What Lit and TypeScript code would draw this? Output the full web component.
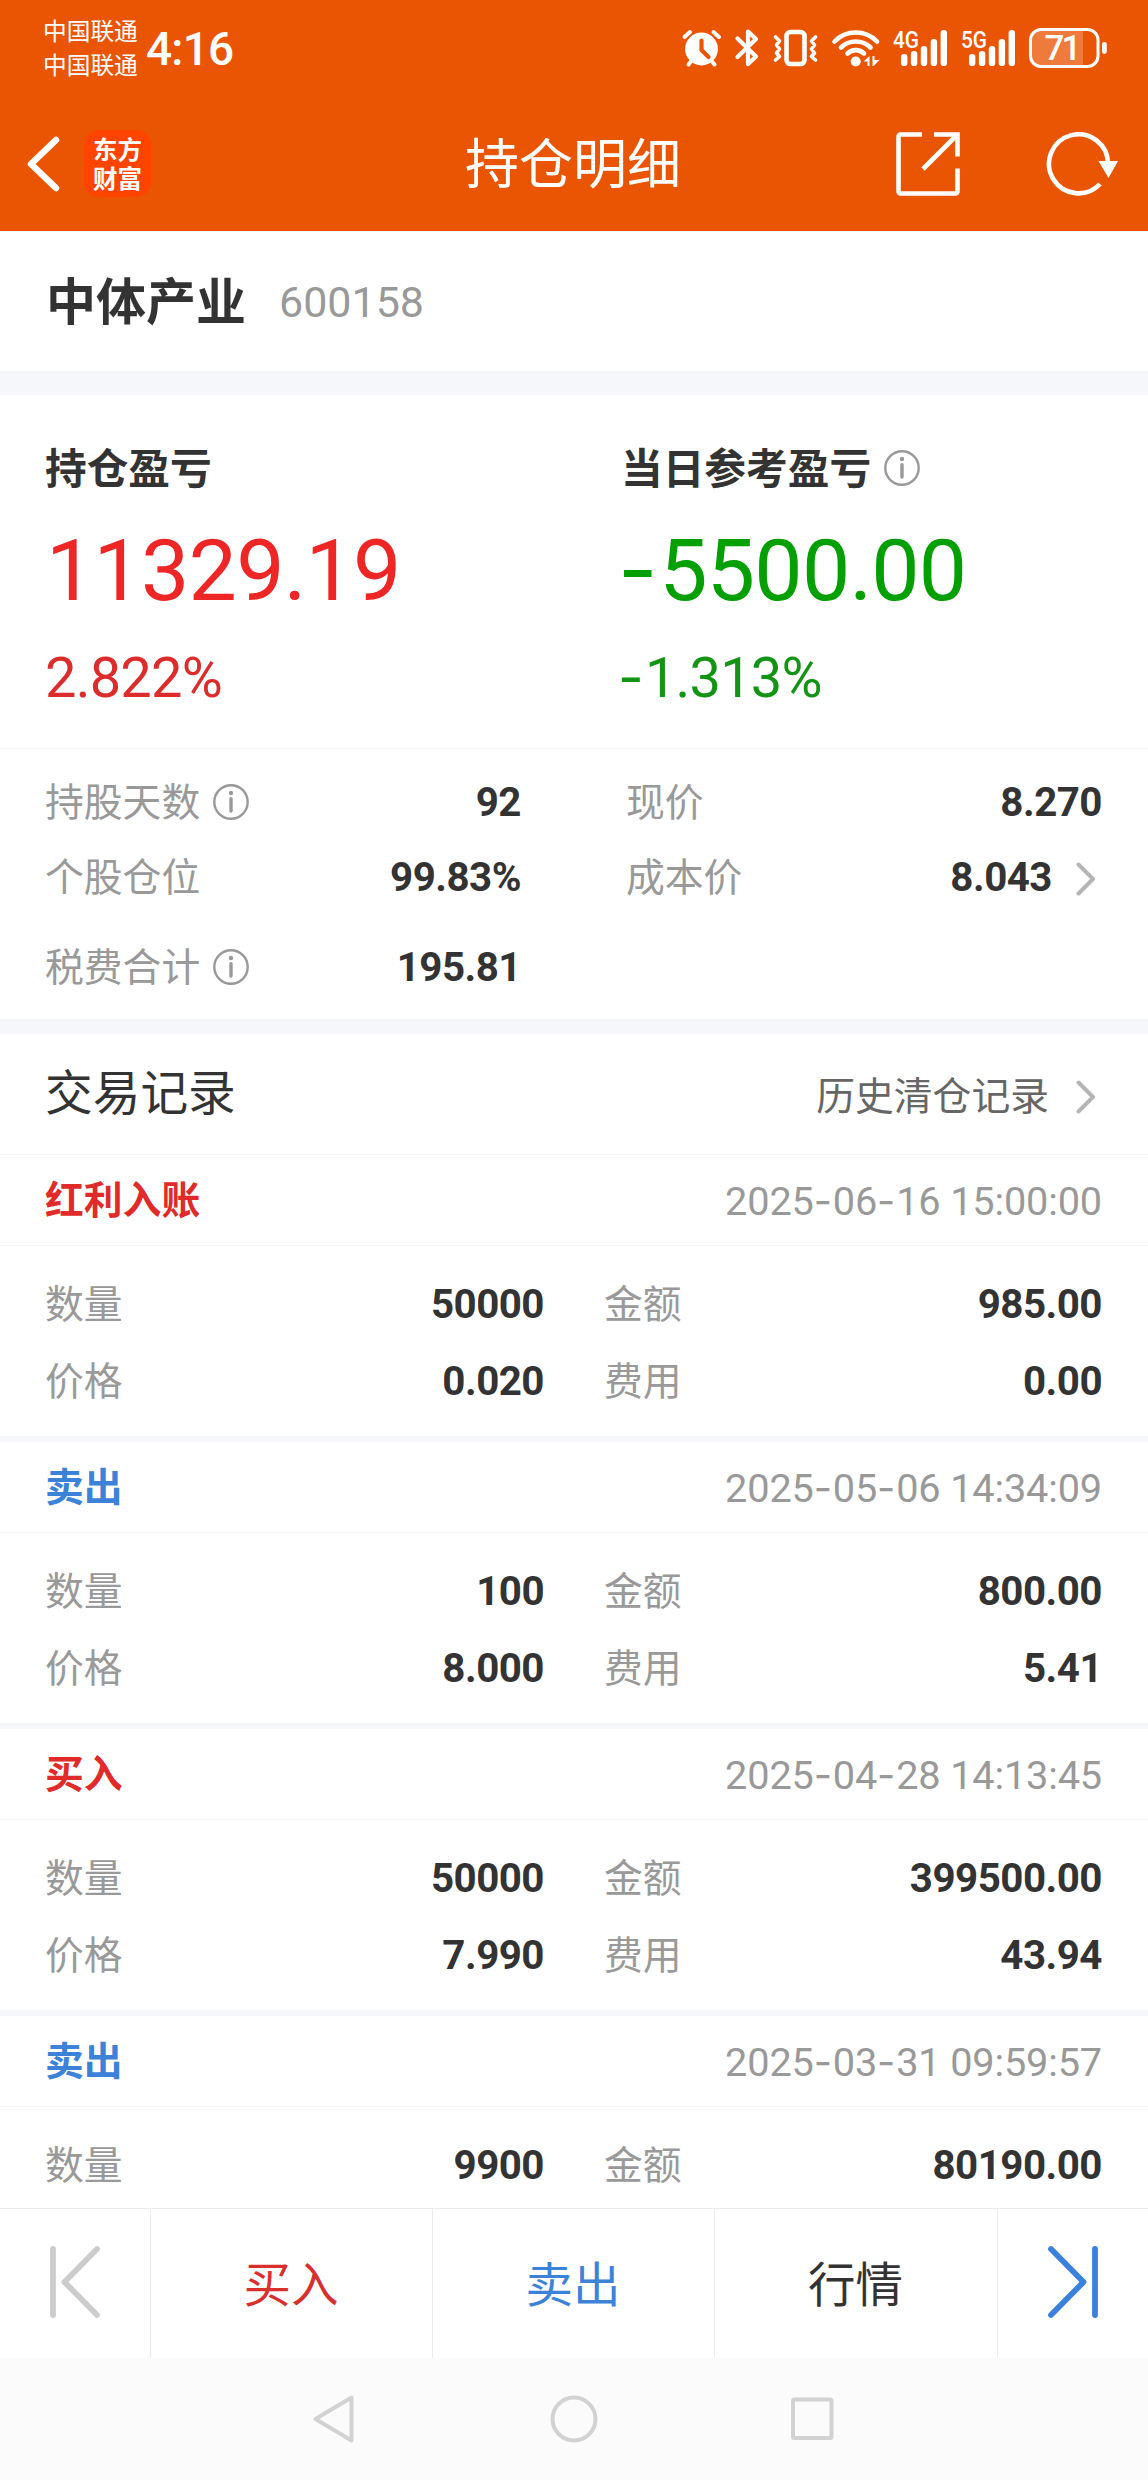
import { LitElement, html, css, svg, nothing } from "lit";
import { customElement, property } from "lit/decorators.js";
import { classMap } from "lit/directives/class-map.js";

interface Trade {
  kind: string;
  tone: "red" | "blue";
  time: string;
  qty: string;
  amount: string;
  price?: string;
  fee?: string;
}

const TRADES: Trade[] = [
  { kind: "红利入账", tone: "red", time: "2025-06-16 15:00:00", qty: "50000", amount: "985.00", price: "0.020", fee: "0.00" },
  { kind: "卖出", tone: "blue", time: "2025-05-06 14:34:09", qty: "100", amount: "800.00", price: "8.000", fee: "5.41" },
  { kind: "买入", tone: "red", time: "2025-04-28 14:13:45", qty: "50000", amount: "399500.00", price: "7.990", fee: "43.94" },
  { kind: "卖出", tone: "blue", time: "2025-03-31 09:59:57", qty: "9900", amount: "80190.00" },
];

// Hyphens are set in a face with a wider dash than the digits' own.
const dashed = (text: string) =>
  text.split("-").map((part, i) => (i ? html`<span class="dash">-</span>${part}` : part));

const infoIcon = html`<svg class="info" width="36" height="36" viewBox="0 0 36 36">
  <circle cx="18" cy="18" r="16.7" fill="none" stroke="#999" stroke-width="2.4" />
  <circle cx="18" cy="9" r="2.2" fill="#999" />
  <path d="M18 14.8V27" stroke="#999" stroke-width="3.4" stroke-linecap="round" />
</svg>`;

const moreIcon = html`<svg width="20" height="34" viewBox="0 0 20 34">
  <path d="M2.5 2.5L17 17L2.5 31.5" fill="none" stroke="#b5b5b5" stroke-width="4" stroke-linecap="round" stroke-linejoin="round" />
</svg>`;

const base = css`
  * { box-sizing: border-box; }
  svg { display: block; flex: none; }
  .dash { font-family: Inter, sans-serif; line-height: 0; letter-spacing: 0.02em; }
`;

@customElement("status-bar")
export class StatusBar extends LitElement {
  static styles = [base, css`
    :host { display: flex; height: 96px; padding: 0 40px 0 43px; color: #fff; }
    .carriers { display: flex; flex-direction: column; padding-top: 15px; font-size: 23.7px; line-height: 34px; width: 103px; }
    .clock { font-size: 46px; font-weight: 500; line-height: 96px; letter-spacing: -0.8px; padding-top: 1px; }
    .icons { margin-left: auto; display: block; }
    .net { font: 500 24px Roboto, sans-serif; fill: #fff; }
    .charge { font: 500 35px Roboto, sans-serif; fill: #fff; }
  `];

  bars(x: number) {
    return [54, 51, 46, 39, 30].map((top, i) => svg`
      <rect x=${x + i * 9.9} y=${top} width="6.4" height=${66 - top} rx="3.1" fill="#fff" />`);
  }

  render() {
    return html`
      <div class="carriers"><span>中国联通</span><span>中国联通</span></div>
      <div class="clock">4:16</div>
      <svg class="icons" width="428" height="96" viewBox="680 0 428 96" fill="none" stroke="#fff" stroke-linecap="round" stroke-linejoin="round">
        <circle cx="701.5" cy="49" r="16.4" fill="#fff" stroke="none" />
        <path d="M684.500 37L690 32M719 37L713.500 32" stroke-width="4" />
        <path d="M693 59L688.500 64.500M710 59L714.500 64.500" stroke-width="4" />
        <path d="M701.500 40.500V50L708.500 57" stroke="#ea5504" stroke-width="4.200" />
        <path d="M737.500 38.500L756 56.500L748 64V31.500L756 39L737.500 57" stroke-width="4.200" />
        <rect x="786.500" y="32" width="18" height="32" rx="4" stroke-width="4.600" />
        <path d="M775.500 37L779.500 41L776.500 45L779.500 49L776.500 53L779.500 56.500L775.500 60M815.500 37L811.500 41L814.500 45L811.500 49L814.500 53L811.500 56.500L815.500 60" stroke-width="3.600" />
        <path d="M834.500 41.500C846 29.500 865.500 29.500 877 41.500" stroke-width="4.600" />
        <path d="M841 47.500C849 39.500 862.500 39.500 870.500 47.500" stroke-width="4.600" />
        <path d="M847.500 53.500C852 49 859.500 49 864 53.500" stroke-width="4.600" />
        <circle cx="855.700" cy="61.500" r="5" fill="#fff" stroke="none" />
        <path d="M863.500 61.500L869.500 56V66H867.500V61.500ZM872.500 56H874.500V60H879.500L873.500 66H872.500Z" fill="#fff" stroke="none" />
        <g stroke="none">
          <text class="net" x="893" y="48" textLength="26" lengthAdjust="spacingAndGlyphs">4G</text>
          ${this.bars(901)}
          <text class="net" x="961" y="48" textLength="26" lengthAdjust="spacingAndGlyphs">5G</text>
          ${this.bars(969)}
          <path d="M1041 30H1083V66H1041Q1031 66 1031 56V40Q1031 30 1041 30Z" fill="#fff" fill-opacity=".22" />
          <text class="charge" x="1044.500" y="60" textLength="37">71</text>
          <rect x="1102" y="42" width="4.800" height="12" rx="2.400" fill="#fff" />
        </g>
        <rect x="1030.500" y="29.500" width="67.500" height="37" rx="10.500" stroke-width="3" />
      </svg>`;
  }
}

@customElement("title-bar")
export class TitleBar extends LitElement {
  static styles = [base, css`
    :host { display: grid; grid-template-columns: 1fr auto 1fr; align-items: center; height: 135px; padding: 0 30px 0 26px; color: #fff; }
    .left { display: flex; align-items: center; gap: 23px; }
    .logo { width: 67px; height: 67px; border-radius: 15px; background: #ff4400; display: flex; flex-direction: column; align-items: center; justify-content: center; font-size: 24.5px; font-weight: 700; line-height: 29px; padding-top: 2px; }
    .title { font-size: 54px; line-height: 68px; padding: 5px 0 0 2px; }
    .right { display: flex; justify-content: flex-end; gap: 86px; }
  `];

  render() {
    return html`
      <div class="left">
        <svg width="35" height="56" viewBox="0 0 35 56"><path d="M30 4L5 28L30 52" fill="none" stroke="#fff" stroke-width="6.500" stroke-linecap="round" stroke-linejoin="round" /></svg>
        <div class="logo"><span>东方</span><span>财富</span></div>
      </div>
      <div class="title">持仓明细</div>
      <div class="right">
        <svg width="64" height="64" viewBox="0 0 64 64" fill="none" stroke="#fff" stroke-width="4.600">
          <path d="M26 2.500H5Q2.500 2.500 2.500 5V59Q2.500 61.500 5 61.500H59Q61.500 61.500 61.500 59V36.500" />
          <path d="M38 2.500H61.500V24.500M60 4L27 37" />
        </svg>
        <svg width="72" height="64" viewBox="0 0 72 64" fill="none" stroke="#fff">
          <path d="M62 32A29.500 29.500 0 1 0 54 52" stroke-width="4.600" />
          <path d="M52.500 29H72L62.500 46Z" fill="#fff" stroke="none" />
        </svg>
      </div>`;
  }
}

@customElement("position-summary")
export class PositionSummary extends LitElement {
  static styles = [base, css`
    :host { display: block; }
    .stock { display: flex; align-items: center; gap: 33px; height: 140px; padding: 4px 46px 0; }
    .name { font-size: 50px; font-weight: 700; }
    .code { font-size: 43px; color: #999; }
    .band { height: 24px; background: #f5f7fa; }
    .band.thin { height: 15px; }
    .profit { display: grid; grid-template-columns: 576px 1fr; height: 354px; padding: 47px 0 0 45px; border-bottom: 1px solid #f7f7f7; }
    .cap { display: flex; align-items: center; gap: 13px; height: 56px; font-size: 41.7px; font-weight: 700; }
    .cap .info { position: relative; top: -2px; }
    .big { font-size: 86px; line-height: 100px; margin-top: 23px; letter-spacing: -0.8px; }
    .pct { font-size: 56px; line-height: 70px; margin-top: 22px; letter-spacing: -0.8px; }
    .gain .big { padding-left: 1px; }
    .loss .big, .loss .pct { margin-left: -3px; }
    .gain { color: #ef2626; }
    .gain .pct { color: #dc2c2c; }
    .loss { color: #039f03; }
    .loss .pct { color: #149414; }
    .gain .cap, .loss .cap { color: #333; }
    .facts { display: grid; grid-template-columns: 476px 476px; justify-content: space-between; grid-template-rows: 75px 75px 105px; padding: 17px 46px 0 45px; height: 270px; }
    .fact { display: flex; align-items: center; color: #999; font-size: 38.8px; }
    .fact.low { height: 105px; }
    .fact .info { margin: -3px 0 0 13px; }
    .fact b { margin-left: auto; color: #333; font-size: 40.3px; letter-spacing: -0.5px; }
    .fact .more { margin: 0 6px 0 24px; }
  `];

  render() {
    return html`
      <div class="stock"><span class="name">中体产业</span><span class="code">600158</span></div>
      <div class="band"></div>
      <div class="profit">
        <div class="gain">
          <div class="cap">持仓盈亏</div>
          <div class="big">11329.19</div>
          <div class="pct">2.822%</div>
        </div>
        <div class="loss">
          <div class="cap">当日参考盈亏 ${infoIcon}</div>
          <div class="big">${dashed("-5500.00")}</div>
          <div class="pct">${dashed("-1.313%")}</div>
        </div>
      </div>
      <div class="facts">
        <div class="fact">持股天数 ${infoIcon}<b>92</b></div>
        <div class="fact">现价<b>8.270</b></div>
        <div class="fact">个股仓位<b>99.83%</b></div>
        <div class="fact">成本价<b>8.043</b><span class="more">${moreIcon}</span></div>
        <div class="fact low">税费合计 ${infoIcon}<b>195.81</b></div>
      </div>
      <div class="band thin"></div>`;
  }
}

@customElement("trade-record")
export class TradeRecord extends LitElement {
  @property({ attribute: false }) trade!: Trade;

  static styles = [base, css`
    :host { display: block; height: 287px; flex: none; border-bottom: 6px solid #f5f7fa; }
    .head { display: flex; justify-content: space-between; align-items: center; height: 91px; padding: 3px 46px 0 45px; border-bottom: 1px solid #f7f7f7; }
    .kind { font-size: 38.8px; font-weight: 700; }
    .red { color: #e12a2a; }
    .blue { color: #3b82d8; }
    .time { font-size: 39.7px; color: #999; letter-spacing: -0.15px; }
    .body { display: grid; grid-template-columns: 499px 498px; column-gap: 60px; grid-auto-rows: 77px; padding: 21px 46px 0 45px; }
    .cell { display: flex; justify-content: space-between; align-items: center; font-size: 38.8px; color: #999; }
    .cell b { color: #333; font-size: 40.3px; letter-spacing: -0.5px; }
  `];

  cell(label: string, value?: string) {
    return value ? html`<div class="cell">${label}<b>${value}</b></div>` : nothing;
  }

  render() {
    const t = this.trade;
    return html`
      <div class="head">
        <span class=${classMap({ kind: true, [t.tone]: true })}>${t.kind}</span>
        <span class="time">${dashed(t.time)}</span>
      </div>
      <div class="body">
        ${this.cell("数量", t.qty)}${this.cell("金额", t.amount)}
        ${this.cell("价格", t.price)}${this.cell("费用", t.fee)}
      </div>`;
  }
}

@customElement("action-bar")
export class ActionBar extends LitElement {
  static styles = [base, css`
    :host { display: grid; grid-template-columns: 151px 282px 282px 283px 150px; height: 150px; border-top: 1px solid #ebebeb; background: #fff; }
    .slot { display: flex; align-items: center; justify-content: center; font-size: 47.5px; border-right: 1px solid #ebebeb; padding: 5px 1px 0 0; }
    .slot.step { padding: 0 0 4px; }
    .slot:last-child { border-right: 0; }
    .red { color: #d8302f; }
    .blue { color: #3b82d8; }
    .dark { color: #333; }
  `];

  render() {
    return html`
      <div class="slot step">
        <svg width="52" height="74" viewBox="0 0 52 74" fill="none" stroke="#ccc" stroke-width="5.800" stroke-linecap="round" stroke-linejoin="round"><path d="M4 4V70M48 4L15.500 37L48 70" /></svg>
      </div>
      <div class="slot red">买入</div>
      <div class="slot blue">卖出</div>
      <div class="slot dark">行情</div>
      <div class="slot step">
        <svg width="52" height="74" viewBox="0 0 52 74" fill="none" stroke="#3b82dc" stroke-width="5.800" stroke-linecap="round" stroke-linejoin="round"><path d="M48 4V70M4 4L36.500 37L4 70" /></svg>
      </div>`;
  }
}

@customElement("system-nav")
export class SystemNav extends LitElement {
  static styles = [base, css`
    :host { display: flex; align-items: center; justify-content: center; gap: 190px; height: 122px; background: #fbfbfb; }
  `];

  render() {
    return html`
      <svg width="48" height="48" viewBox="0 0 48 48" fill="none" stroke="#d2d2d2" stroke-width="4" stroke-linejoin="round"><path d="M3.500 24L39.500 2.500V45.500Z" /></svg>
      <svg width="48" height="48" viewBox="0 0 48 48" fill="none" stroke="#d2d2d2" stroke-width="4"><circle cx="24" cy="24" r="21.500" /></svg>
      <svg width="48" height="48" viewBox="0 0 48 48" fill="none" stroke="#d2d2d2" stroke-width="4"><rect x="5" y="4.500" width="38.500" height="38.500" rx="1.500" /></svg>`;
  }
}

@customElement("app-root")
export class AppRoot extends LitElement {
  static styles = [base, css`
    :host { display: flex; flex-direction: column; width: 1148px; height: 2480px; overflow: hidden; background: #fff; color: #333; font-family: Roboto, "Noto Sans CJK SC", sans-serif; line-height: 1.2; }
    .top { flex: none; height: 231px; background: #ea5504; }
    .section { display: flex; flex: none; align-items: center; justify-content: space-between; height: 121px; padding: 2px 52px 0 45px; border-bottom: 1px solid #f7f7f7; }
    .heading { font-size: 47.7px; }
    .history { display: flex; align-items: center; gap: 27px; font-size: 38.8px; color: #666; padding-top: 4px; }
    .list { display: flex; flex-direction: column; flex: 1; min-height: 0; overflow: hidden; }
    position-summary, action-bar, system-nav { flex: none; }
  `];

  render() {
    return html`
      <div class="top"><status-bar></status-bar><title-bar></title-bar></div>
      <position-summary></position-summary>
      <div class="section">
        <span class="heading">交易记录</span>
        <span class="history">历史清仓记录 ${moreIcon}</span>
      </div>
      <div class="list">${TRADES.map((t) => html`<trade-record .trade=${t}></trade-record>`)}</div>
      <action-bar></action-bar>
      <system-nav></system-nav>`;
  }
}
